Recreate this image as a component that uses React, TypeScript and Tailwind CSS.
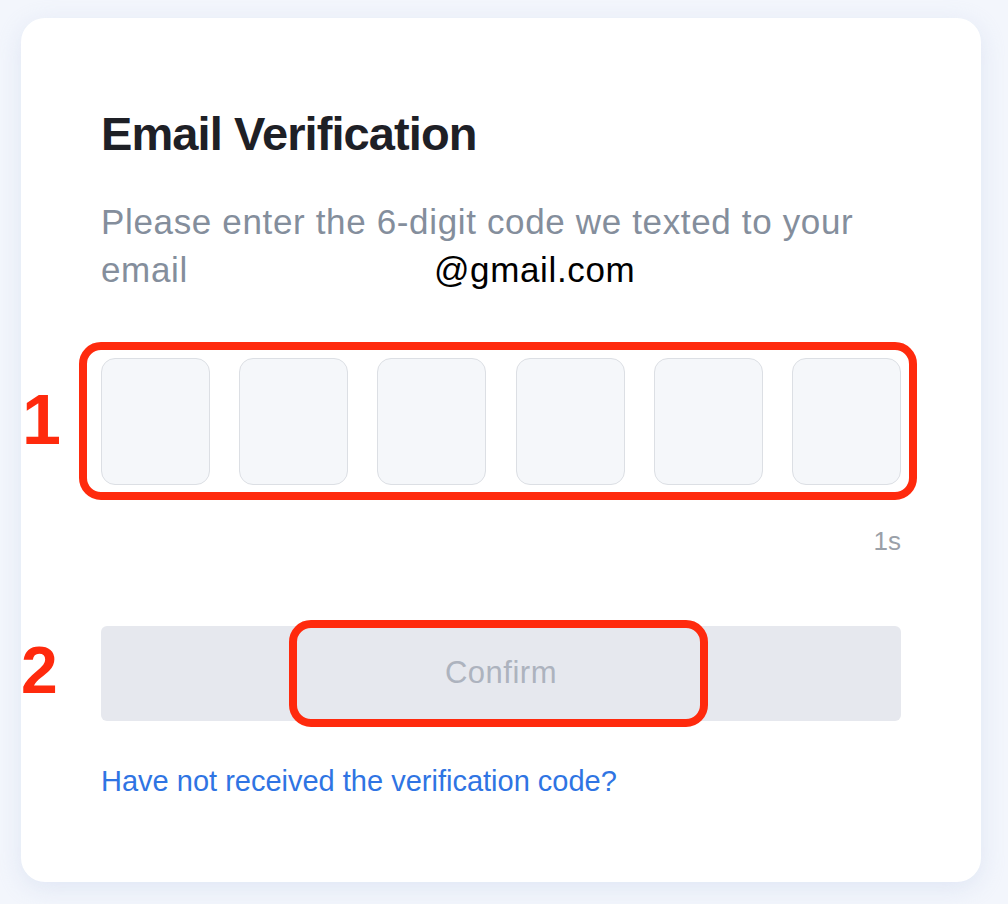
import React from 'react'

const font = { fontFamily: '"Liberation Sans", Arial, sans-serif' }

const CodeBox = () => (
  <div className="h-[127px] w-[109px] rounded-[14px] border border-[#dcdfe4] bg-[#f5f7fa]" />
)

export default function App() {
  return (
    <div
      className="relative min-h-[904px] w-[1008px] bg-[#f3f6fc] pt-[18px] pl-[21px]"
      style={font}
    >
      <div className="relative h-[864px] w-[960px] rounded-[24px] bg-white pt-[92px] pl-[80px] pr-[80px] shadow-[0_6px_24px_rgba(200,210,235,0.45)]">
        <h1 className="text-[47px] font-bold leading-none tracking-[-0.9px] text-[#1e2026]">
          Email Verification
        </h1>

        <p className="mt-[41px] text-[35px] leading-[48px] tracking-[0.65px] text-[#848e9c]">
          Please enter the 6-digit code we texted to your
          <br />
          email<span className="inline-block w-[246px]" />
          <span className="text-black">@gmail.com</span>
        </p>

        <div className="relative mt-[64px]">
          <div className="flex justify-between">
            <CodeBox />
            <CodeBox />
            <CodeBox />
            <CodeBox />
            <CodeBox />
            <CodeBox />
          </div>
          {/* annotation 1 */}
          <div className="pointer-events-none absolute left-[-22px] top-[-16px] h-[158px] w-[838px] rounded-[22px] border-[8px] border-[#ff2a0d]" />
        </div>

        <div className="mt-[40px] text-right text-[26px] leading-[32px] text-[#9aa0a8]">
          1s
        </div>

        <div className="relative mt-[69px]">
          <button className="flex h-[95px] w-full items-center justify-center rounded-[6px] bg-[#e6e8ee] text-[31px] tracking-[0.5px] text-[#adb3be]">
            Confirm
          </button>
          {/* annotation 2 */}
          <div className="pointer-events-none absolute left-[188px] top-[-6px] h-[107px] w-[419px] rounded-[22px] border-[8px] border-[#ff2a0d]" />
        </div>

        <div className="mt-[42px] text-[29px] leading-[36px] text-[#2f74e3]">
          Have not received the verification code?
        </div>
      </div>

      <span className="absolute left-[22px] top-[385px] text-[70px] font-bold leading-none text-[#ff2a0d]">
        1
      </span>
      <span className="absolute left-[21px] top-[637px] text-[66px] font-bold leading-none text-[#ff2a0d]">
        2
      </span>
    </div>
  )
}
